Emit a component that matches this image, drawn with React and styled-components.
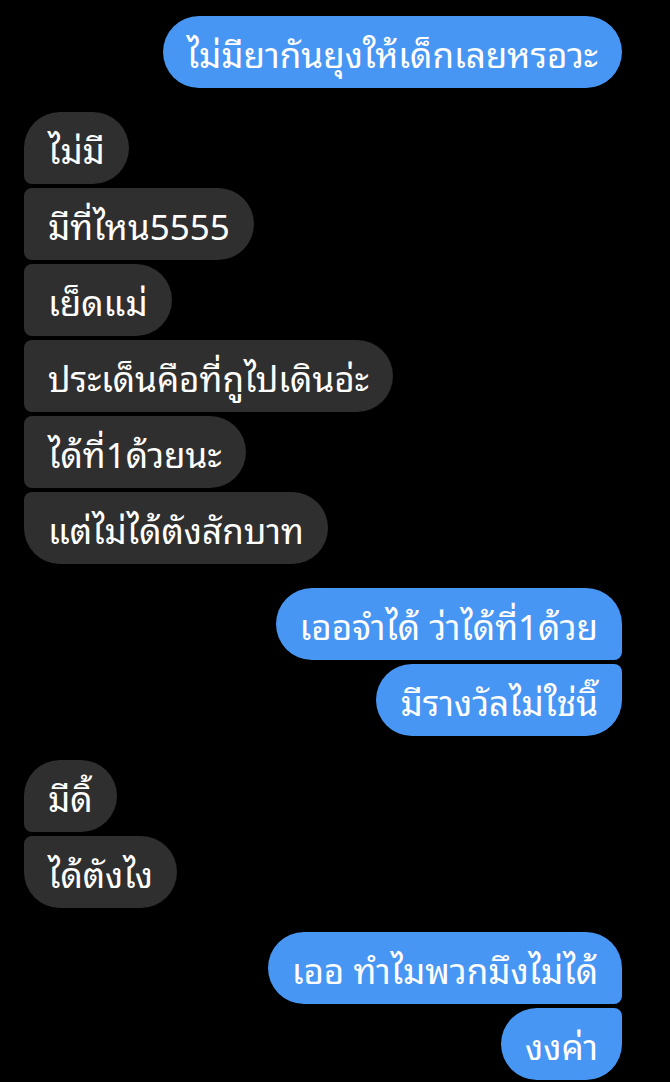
import React from 'react';
import styled, { createGlobalStyle } from 'styled-components';

const Global = createGlobalStyle`
  html, body {
    margin: 0;
    background: #000;
  }
`;

const Thread = styled.div`
  width: 670px;
  height: 1082px;
  overflow: hidden;
  box-sizing: border-box;
  padding: 16px 48px 0 24px;
  display: flex;
  flex-direction: column;
  gap: 24px;
  background: #000;
  font-family: 'Noto Sans Thai Looped', 'Noto Sans Thai', Thonburi, 'Noto Sans', 'DejaVu Sans', sans-serif;
`;

const Group = styled.div`
  display: flex;
  flex-direction: column;
  gap: 4px;
  align-items: ${p => (p.mine ? 'flex-end' : 'flex-start')};
`;

const big = 36;
const small = 8;

function radius(mine, pos) {
  // pos: single | first | middle | last
  const top = pos === 'single' || pos === 'first' ? big : small;
  const bottom = pos === 'single' || pos === 'last' ? big : small;
  return mine
    ? `${big}px ${top}px ${bottom}px ${big}px`
    : `${top}px ${big}px ${big}px ${bottom}px`;
}

const Bubble = styled.div`
  height: 72px;
  box-sizing: border-box;
  padding: 0 24px;
  display: flex;
  align-items: center;
  white-space: nowrap;
  color: #fff;
  font-size: 35px;
  background: ${p => (p.mine ? '#4896f4' : '#2f2f2f')};
  border-radius: ${p => radius(p.mine, p.pos)};
`;

const thread = [
  { mine: true, lines: ['ไม่มียากันยุงให้เด็กเลยหรอวะ'] },
  {
    mine: false,
    lines: [
      'ไม่มี',
      'มีที่ไหน5555',
      'เย็ดแม่',
      'ประเด็นคือที่กูไปเดินอ่ะ',
      'ได้ที่1ด้วยนะ',
      'แต่ไม่ได้ตังสักบาท',
    ],
  },
  { mine: true, lines: ['เออจำได้ ว่าได้ที่1ด้วย', 'มีรางวัลไม่ใช่นิ๊'] },
  { mine: false, lines: ['มีดิ้', 'ได้ตังไง'] },
  { mine: true, lines: ['เออ ทำไมพวกมึงไม่ได้', 'งงค่า'] },
];

function position(i, n) {
  if (n === 1) return 'single';
  if (i === 0) return 'first';
  if (i === n - 1) return 'last';
  return 'middle';
}

export default function App() {
  return (
    <>
      <Global />
      <Thread>
        {thread.map((g, gi) => (
          <Group key={gi} mine={g.mine}>
            {g.lines.map((text, i) => (
              <Bubble key={i} mine={g.mine} pos={position(i, g.lines.length)}>
                {text}
              </Bubble>
            ))}
          </Group>
        ))}
      </Thread>
    </>
  );
}
